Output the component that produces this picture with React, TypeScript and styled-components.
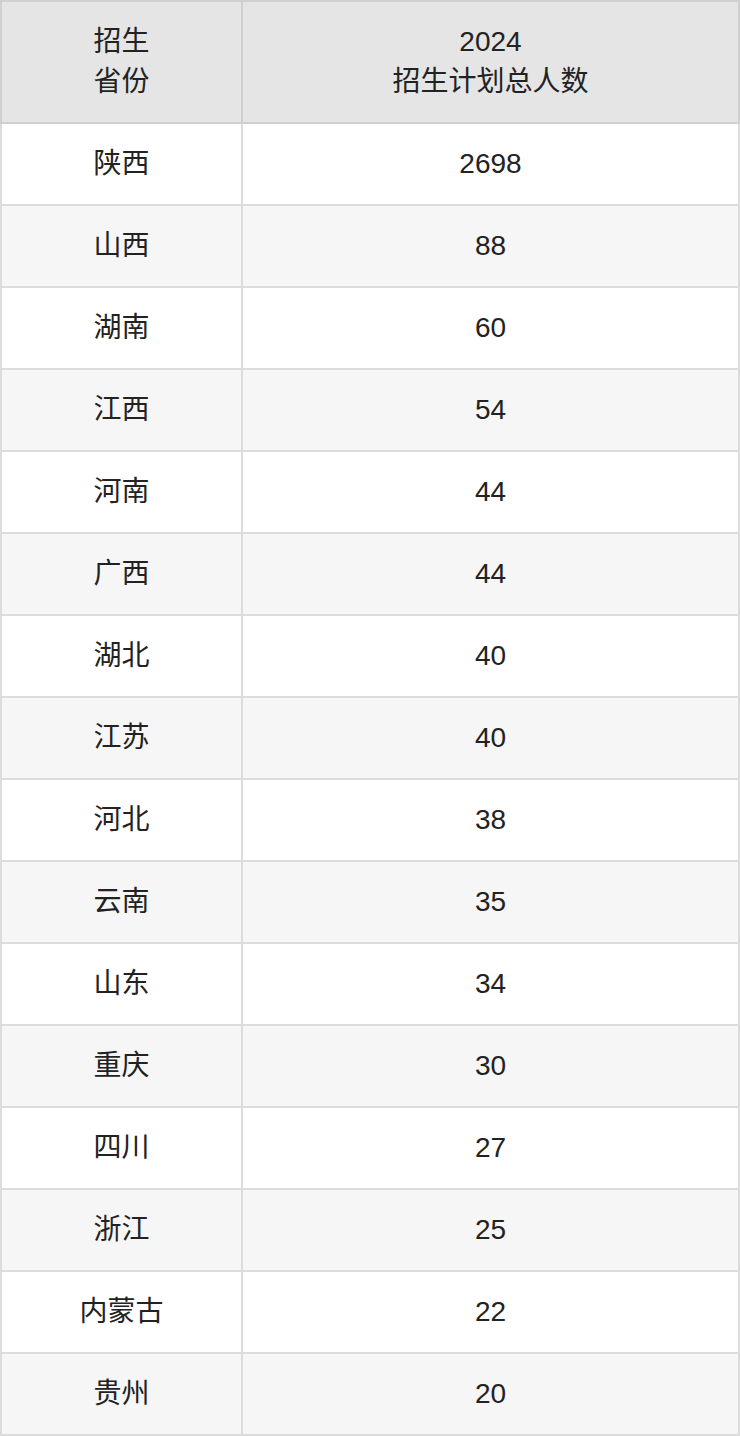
import React from "react";
import styled, { createGlobalStyle } from "styled-components";

const Global = createGlobalStyle`
  html, body { margin: 0; padding: 0; background: #fff; }
  body { font-family: "Liberation Sans", "Noto Sans CJK SC", sans-serif; }
`;

const Table = styled.table`
  width: 740px;
  border-collapse: collapse;
  table-layout: fixed;
  color: #222;
  font-size: 28px;
  line-height: 40px;
  text-align: center;
`;

const HeadCell = styled.th`
  background: #e5e5e5;
  border: 2px solid #d0d0d0;
  font-weight: normal;
  padding: 20px 8px;
  height: 80px;
`;

const Row = styled.tr<{ $alt: boolean }>`
  background: ${(p) => (p.$alt ? "#f6f6f6" : "#ffffff")};
`;

const Cell = styled.td`
  border: 2px solid #dcdcdc;
  padding: 20px 8px;
  height: 40px;
`;

const data: [string, string][] = [
  ["陕西", "2698"],
  ["山西", "88"],
  ["湖南", "60"],
  ["江西", "54"],
  ["河南", "44"],
  ["广西", "44"],
  ["湖北", "40"],
  ["江苏", "40"],
  ["河北", "38"],
  ["云南", "35"],
  ["山东", "34"],
  ["重庆", "30"],
  ["四川", "27"],
  ["浙江", "25"],
  ["内蒙古", "22"],
  ["贵州", "20"],
];

export default function App() {
  return (
    <>
      <Global />
      <Table>
        <colgroup>
          <col style={{ width: 241 }} />
          <col />
        </colgroup>
        <thead>
          <tr>
            <HeadCell>
              招生
              <br />
              省份
            </HeadCell>
            <HeadCell>
              2024
              <br />
              招生计划总人数
            </HeadCell>
          </tr>
        </thead>
        <tbody>
          {data.map(([p, n], i) => (
            <Row key={p} $alt={i % 2 === 1}>
              <Cell>{p}</Cell>
              <Cell>{n}</Cell>
            </Row>
          ))}
        </tbody>
      </Table>
    </>
  );
}
